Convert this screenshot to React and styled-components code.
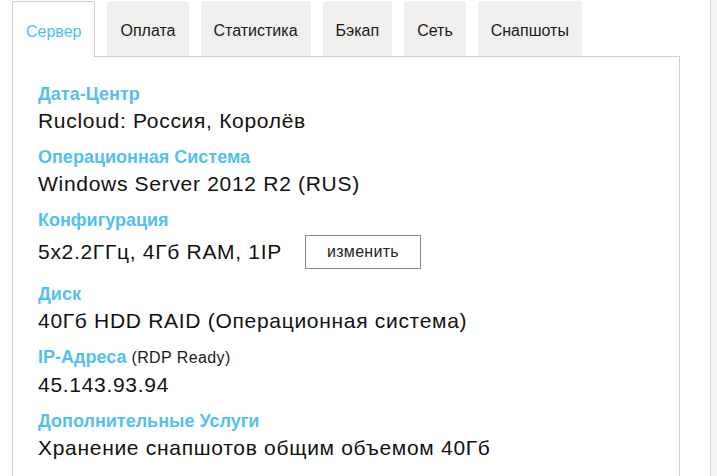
import React from "react";
import styled, { createGlobalStyle } from "styled-components";

const GlobalStyle = createGlobalStyle`
  html, body {
    margin: 0;
    padding: 0;
    background: #f3f3f3;
    font-family: "Liberation Sans", Arial, sans-serif;
  }
`;

const Page = styled.div`
  width: 711px;
  min-height: 476px;
  background: #fff;
  border-right: 1px solid #d6d6d6;
  padding: 1px 0 0 12px;
  box-sizing: border-box;
`;

const Tabs = styled.div`
  display: flex;
  gap: 12px;
  position: relative;
  z-index: 1;
  margin-bottom: -1px;
`;

const Tab = styled.div`
  padding: 4px ${(p) => (p.$active ? 13 : 12)}px 0;
  display: flex;
  align-items: center;
  font-size: 16px;
  box-sizing: border-box;
  border-radius: 3px 3px 0 0;
  color: ${(p) => (p.$active ? "#4dbfef" : "#1a1a1a")};
  background: ${(p) => (p.$active ? "#fff" : "#f0efee")};
  border: 1px solid ${(p) => (p.$active ? "#cfcfcf" : "transparent")};
  border-bottom: none;
  height: ${(p) => (p.$active ? 56 : 55)}px;
  cursor: pointer;
`;

const Panel = styled.div`
  width: 668px;
  min-height: 420px;
  box-sizing: border-box;
  border: 1px solid #cfcfcf;
  border-bottom: none;
  padding: 26px 25px 0;
`;

const Label = styled.div`
  font-size: 18px;
  font-weight: bold;
  line-height: 22px;
  color: #52c1ef;
`;

const Note = styled.span`
  font-size: 16px;
  font-weight: normal;
  letter-spacing: 0.4px;
  color: #1a1a1a;
`;

const Value = styled.div`
  display: flex;
  align-items: center;
  font-size: 21px;
  line-height: 28px;
  color: #111;
  letter-spacing: 0.7px;
  margin-top: ${(p) => (p.$withButton ? 4 : 2)}px;
  margin-bottom: ${(p) => (p.$withButton ? 14 : 11)}px;
`;

const Button = styled.button`
  margin-left: 23px;
  width: 116px;
  height: 34px;
  background: #fff;
  border: 1px solid #8a8a8a;
  font-family: inherit;
  font-size: 16px;
  letter-spacing: 0.3px;
  color: #222;
  cursor: pointer;
`;

const tabs = ["Сервер", "Оплата", "Статистика", "Бэкап", "Сеть", "Снапшоты"];

export default function App() {
  return (
    <>
      <GlobalStyle />
      <Page>
        <Tabs>
          {tabs.map((t, i) => (
            <Tab key={t} $active={i === 0}>
              {t}
            </Tab>
          ))}
        </Tabs>
        <Panel>
          <Label>Дата-Центр</Label>
          <Value>Rucloud: Россия, Королёв</Value>
          <Label>Операционная Система</Label>
          <Value>Windows Server 2012 R2 (RUS)</Value>
          <Label>Конфигурация</Label>
          <Value $withButton>
            5x2.2ГГц, 4Гб RAM, 1IP
            <Button>изменить</Button>
          </Value>
          <Label>Диск</Label>
          <Value>40Гб HDD RAID (Операционная система)</Value>
          <Label>
            IP-Адреса <Note>(RDP Ready)</Note>
          </Label>
          <Value>45.143.93.94</Value>
          <Label>Дополнительные Услуги</Label>
          <Value>Хранение снапшотов общим объемом 40Гб</Value>
        </Panel>
      </Page>
    </>
  );
}
